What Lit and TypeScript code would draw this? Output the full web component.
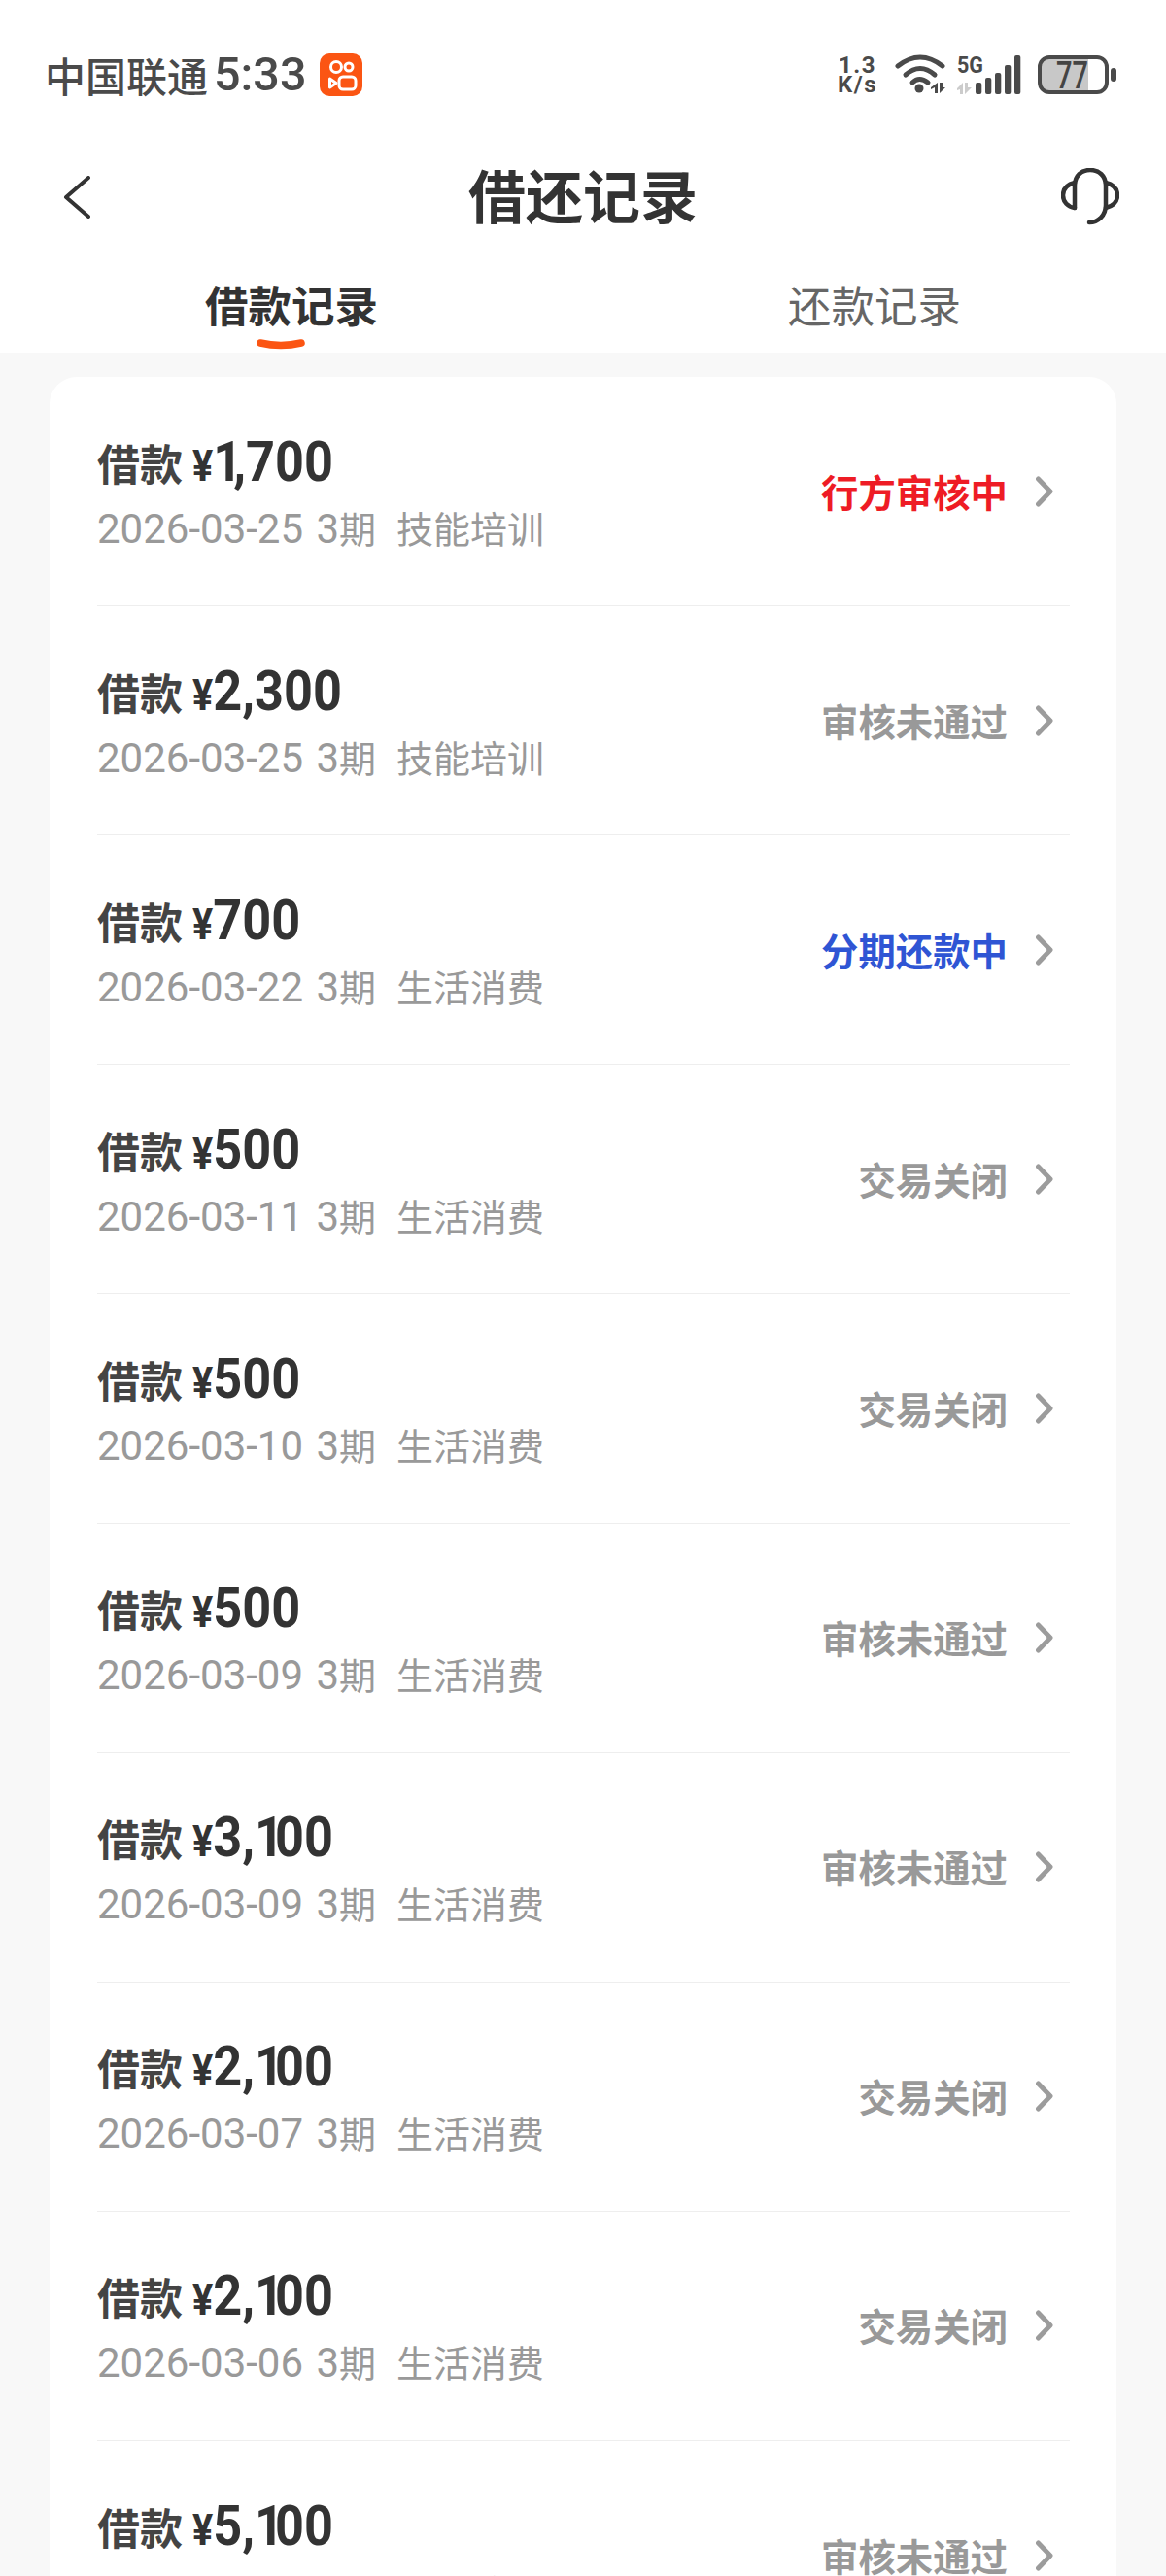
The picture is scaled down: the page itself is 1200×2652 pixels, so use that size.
import { html, LitElement, css } from "lit";
import { customElement } from "lit/decorators.js";
import { classMap } from "lit/directives/class-map.js";

type Loan = {
  amount: string;
  date: string;
  purpose: string;
  status: string;
  tone: "red" | "blue" | "grey";
};

const loans: Loan[] = [
  { amount: "1,700", date: "2026-03-25", purpose: "技能培训", status: "行方审核中", tone: "red" },
  { amount: "2,300", date: "2026-03-25", purpose: "技能培训", status: "审核未通过", tone: "grey" },
  { amount: "700", date: "2026-03-22", purpose: "生活消费", status: "分期还款中", tone: "blue" },
  { amount: "500", date: "2026-03-11", purpose: "生活消费", status: "交易关闭", tone: "grey" },
  { amount: "500", date: "2026-03-10", purpose: "生活消费", status: "交易关闭", tone: "grey" },
  { amount: "500", date: "2026-03-09", purpose: "生活消费", status: "审核未通过", tone: "grey" },
  { amount: "3,100", date: "2026-03-09", purpose: "生活消费", status: "审核未通过", tone: "grey" },
  { amount: "2,100", date: "2026-03-07", purpose: "生活消费", status: "交易关闭", tone: "grey" },
  { amount: "2,100", date: "2026-03-06", purpose: "生活消费", status: "交易关闭", tone: "grey" },
  { amount: "5,100", date: "2026-03-05", purpose: "技能培训", status: "审核未通过", tone: "grey" },
];

@customElement("app-root")
export class AppRoot extends LitElement {
  static styles = css`
    :host {
      display: block;
      width: 1200px;
      height: 2652px;
      overflow: hidden;
      background: #f8f8f8;
      font-family: "Noto Sans CJK SC", sans-serif;
      color: #333;
    }

    svg {
      display: block;
      flex: none;
    }

    .header {
      background: #fff;
    }

    /* status bar */
    .status {
      height: 154px;
      box-sizing: border-box;
      padding: 0 50px 0 46px;
      display: flex;
      align-items: center;
      color: #4a4a4a;
    }

    .carrier {
      font-size: 42px;
      font-weight: 500;
      line-height: 48px;
    }

    .clock {
      font-family: Roboto, sans-serif;
      font-size: 48.5px;
      font-weight: 500;
      line-height: 48px;
      margin-left: 6px;
    }

    .app-badge {
      margin-left: 13px;
    }

    .sys {
      margin-left: auto;
      display: flex;
      align-items: center;
    }

    .speed {
      width: 41px;
      font-family: Roboto, sans-serif;
      font-size: 24px;
      font-weight: 700;
      line-height: 20px;
      text-align: center;
      letter-spacing: 1.5px;
      margin-right: 17px;
    }

    .wifi {
      margin-right: 9px;
    }

    .signal {
      margin-right: 13px;
    }

    /* nav */
    .nav {
      height: 98px;
      padding: 0 48px;
      box-sizing: border-box;
      display: grid;
      grid-template-columns: 1fr auto 1fr;
      align-items: center;
    }

    .nav .back {
      margin-left: 17px;
    }

    .nav .end {
      justify-self: end;
    }

    .nav h1 {
      margin: -6px 0 0;
      font-size: 59px;
      font-weight: 700;
      line-height: 70px;
      color: #333;
    }

    /* tabs */
    .tabs {
      height: 111px;
      display: flex;
    }

    .tab {
      position: relative;
      flex: 1;
      text-align: center;
      padding-top: 39px;
      font-size: 44.5px;
      line-height: 44px;
      color: #666;
    }

    .tab.on {
      font-weight: 700;
      color: #333;
    }

    .tab .mark {
      position: absolute;
      left: 264px;
      top: 97px;
    }

    /* list */
    .list {
      padding: 25px 51px 0;
    }

    .card {
      background: #fff;
      border-radius: 28px;
      padding: 0 48px 0 49px;
    }

    .row {
      height: 236.12px;
      box-sizing: border-box;
      border-bottom: 1px solid #eee;
      display: flex;
      align-items: center;
      justify-content: space-between;
      padding-right: 17px;
    }

    .info {
      display: flex;
      flex-direction: column;
      gap: 7px;
      padding-top: 2px;
    }

    .title {
      display: flex;
      align-items: baseline;
      font-size: 44px;
      font-weight: 700;
      line-height: 62px;
      color: #444;
    }

    .amount {
      display: inline-block;
      margin-left: 10px;
      font-family: Roboto, sans-serif;
      font-size: 58px;
      font-weight: 700;
      color: #333;
      transform: scaleX(0.9);
      transform-origin: left center;
    }

    .amount .yen {
      font-size: 44px;
    }

    /* the reference's 1 is narrower than its other digits */
    .amount .one {
      letter-spacing: -10px;
    }

    .meta {
      font-family: Roboto, sans-serif;
      font-size: 42px;
      line-height: 50px;
      color: #999;
      white-space: nowrap;
    }

    .meta .cn {
      font-family: "Noto Sans CJK SC", sans-serif;
      font-size: 38px;
    }

    .meta .period {
      margin-left: 3px;
    }

    .meta .purpose {
      margin-left: 21px;
    }

    .side {
      display: flex;
      align-items: center;
      gap: 29px;
    }

    .state {
      font-size: 38.4px;
      font-weight: 700;
      line-height: 48px;
      position: relative;
      top: -1px;
    }

    .state.red {
      color: #ee1c25;
    }

    .state.blue {
      color: #2f55d4;
    }

    .state.grey {
      color: #999;
    }
  `;

  private renderStatusBar() {
    return html`
      <div class="status">
        <span class="carrier">中国联通</span>
        <span class="clock">5:33</span>
        <svg class="app-badge" width="44" height="44" viewBox="0 0 44 44">
          <rect width="44" height="44" rx="10" fill="#fb5513" />
          <g fill="none" stroke="#fff" stroke-width="3">
            <circle cx="17" cy="14" r="5.5" />
            <circle cx="30" cy="14" r="4" />
            <rect x="20" y="24" width="17" height="13" rx="4" />
            <path d="M10.5 26 L17 30.5 L10.5 35 Z" stroke-linejoin="round" />
          </g>
        </svg>
        <div class="sys">
          <div class="speed">1.3<br />K/s</div>
          <svg class="wifi" width="56" height="44" viewBox="0 0 56 44" fill="none" stroke="#4a4a4a">
            <path d="M4 13 Q27 -5 50 13" stroke-width="5" stroke-linecap="round" />
            <path d="M12 22 Q27 9 42 22" stroke-width="5" stroke-linecap="round" />
            <path d="M19 30 Q26 23 35 30" stroke-width="5" stroke-linecap="round" />
            <circle cx="26" cy="36" r="4.5" fill="#4a4a4a" stroke="none" />
            <path d="M45 30 V41 H42 V35 L38 37 V35 Z M47 30 H50 V35 H53 L47 41 Z" fill="#4a4a4a" stroke="none" />
          </svg>
          <svg class="signal" width="68" height="44" viewBox="0 0 68 44">
            <text x="0" y="20" font-family="Roboto, sans-serif" font-size="24" font-weight="700" fill="#4a4a4a" textLength="27" lengthAdjust="spacingAndGlyphs">5G</text>
            <path d="M6 30 V42 H3 V37 L0 38 V36 Z M8 30 H11 V35 H15 L8 42 Z" fill="#ccc" />
            <rect x="19" y="30" width="6.3" height="12" rx="2" fill="#4a4a4a" />
            <rect x="29" y="25" width="6.3" height="17" rx="2" fill="#4a4a4a" />
            <rect x="39" y="20" width="6.3" height="22" rx="2" fill="#4a4a4a" />
            <rect x="49" y="12" width="6.3" height="30" rx="2" fill="#4a4a4a" />
            <rect x="59" y="2" width="6.3" height="40" rx="2" fill="#4a4a4a" />
          </svg>
          <svg width="84" height="44" viewBox="0 0 84 44">
            <path d="M14 4 H54 V40 H14 Q4 40 4 30 V14 Q4 4 14 4 Z" fill="#c8c8c8" />
            <rect x="4" y="4" width="69" height="36" rx="10" fill="none" stroke="#4a4a4a" stroke-width="4" />
            <text x="21" y="36" font-family="Roboto, sans-serif" font-size="38" font-weight="500" fill="#444" textLength="33" lengthAdjust="spacingAndGlyphs">77</text>
            <rect x="77" y="15" width="6" height="14" rx="3" fill="#4a4a4a" />
          </svg>
        </div>
      </div>
    `;
  }

  private renderAmount(amount: string) {
    return [...amount].map((ch) => (ch === "1" ? html`<span class="one">1</span>` : ch));
  }

  private renderRow(loan: Loan) {
    return html`
      <div class="row">
        <div class="info">
          <div class="title">
            借款<span class="amount"><span class="yen">¥</span>${this.renderAmount(loan.amount)}</span>
          </div>
          <div class="meta">
            ${loan.date} <span class="period">3</span><span class="cn">期</span><span class="cn purpose">${loan.purpose}</span>
          </div>
        </div>
        <div class="side">
          <span class=${classMap({ state: true, [loan.tone]: true })}>${loan.status}</span>
          <svg width="18" height="32" viewBox="0 0 18 32" fill="none">
            <path d="M2.5 3 L15 16 L2.5 29" stroke="#9c9c9c" stroke-width="5" stroke-linecap="round" stroke-linejoin="round" />
          </svg>
        </div>
      </div>
    `;
  }

  render() {
    return html`
      <div class="header">
        ${this.renderStatusBar()}
        <div class="nav">
          <svg class="back" width="28" height="44" viewBox="0 0 28 44" fill="none">
            <path d="M26 2 L3 22 L26 42" stroke="#333" stroke-width="4" stroke-linecap="round" stroke-linejoin="round" />
          </svg>
          <h1>借还记录</h1>
          <svg class="end" width="60" height="60" viewBox="0 0 60 60" fill="none" stroke="#333" stroke-width="4.5" stroke-linecap="round" stroke-linejoin="round">
            <path d="M14 41 V18 C14 8 21 2 30 2 C39 2 46 8 46 18 V38 C46 49 38 56 29 56" />
            <path d="M14 15 C6 17 2 22 2 28 C2 35 7 40 14 41" />
            <path d="M46 15 C54 17 58 22 58 28 C58 34 54 39 46 41" />
          </svg>
        </div>
        <div class="tabs">
          <div class="tab on">
            借款记录
            <svg class="mark" width="50" height="13" viewBox="0 0 50 13">
              <path d="M4 4 Q25 9 46 4" fill="none" stroke="#fb5513" stroke-width="7.5" stroke-linecap="round" />
            </svg>
          </div>
          <div class="tab">还款记录</div>
        </div>
      </div>
      <div class="list">
        <div class="card">${loans.map((loan) => this.renderRow(loan))}</div>
      </div>
    `;
  }
}
